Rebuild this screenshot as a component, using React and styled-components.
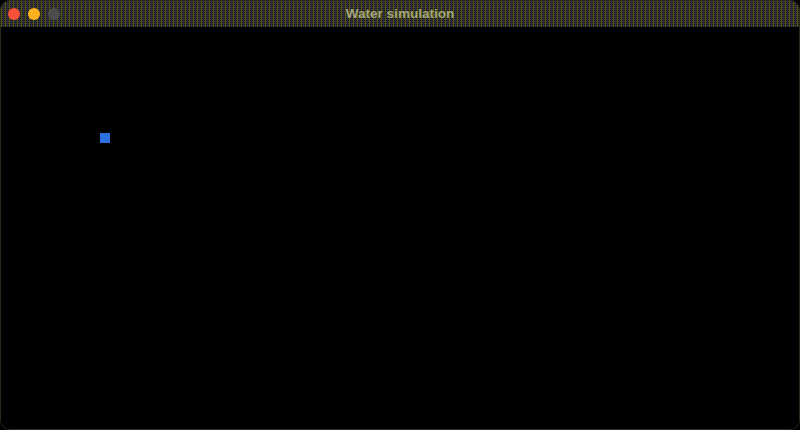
import React from 'react'
import styled, { createGlobalStyle } from 'styled-components'

const Global = createGlobalStyle`
html, body {
  margin: 0;
  height: 100%;
  background: #000;
}
`

// the reference is a dithered gif, so the chrome uses a small repeating tile
const dither = `
  linear-gradient(90deg, #555510 0 1px, transparent 1px 2px, #26264f 2px 3px, transparent 3px 4px),
  linear-gradient(0deg, #18180f 0 1px, transparent 1px 2px, #18180f 2px 3px, transparent 3px 4px),
  linear-gradient(#3f3f38, #3f3f38)
`

const Window = styled.div`
  width: 800px;
  height: 430px;
  box-sizing: border-box;
  display: flex;
  flex-direction: column;
  background: #000;
  border-radius: 10px;
  border: 1px solid #2a2a1c;
  overflow: hidden;
`

const TitleBar = styled.div`
  height: 26px;
  flex-shrink: 0;
  display: grid;
  grid-template-columns: 1fr auto 1fr;
  align-items: center;
  padding: 0 7px;
  background-image: ${dither};
  background-size: 4px 4px;
`

const Lights = styled.div`
  display: flex;
  gap: 8px;
`

const Light = styled.span`
  width: 12px;
  height: 12px;
  border-radius: 50%;
  background: ${p => p.$color};
`

const Title = styled.div`
  font-family: "Liberation Sans", Arial, sans-serif;
  font-size: 13.5px;
  font-weight: 700;
  color: #a4a47c;
  line-height: 26px;
`

const Canvas = styled.div`
  position: relative;
  flex: 1;
  background: #000;
`

const Particle = styled.div`
  position: absolute;
  left: ${p => p.$x}px;
  top: ${p => p.$y}px;
  width: 10px;
  height: 10px;
  background: #2a70e0;
`

const App = () => {
  return (
    <>
      <Global />
      <Window>
        <TitleBar>
          <Lights>
            <Light $color="#f9503a" />
            <Light $color="#fdb21e" />
            <Light $color="#4c4c4c" />
          </Lights>
          <Title>Water simulation</Title>
        </TitleBar>
        <Canvas>
          <Particle $x={99} $y={106} />
        </Canvas>
      </Window>
    </>
  )
}

export default App
